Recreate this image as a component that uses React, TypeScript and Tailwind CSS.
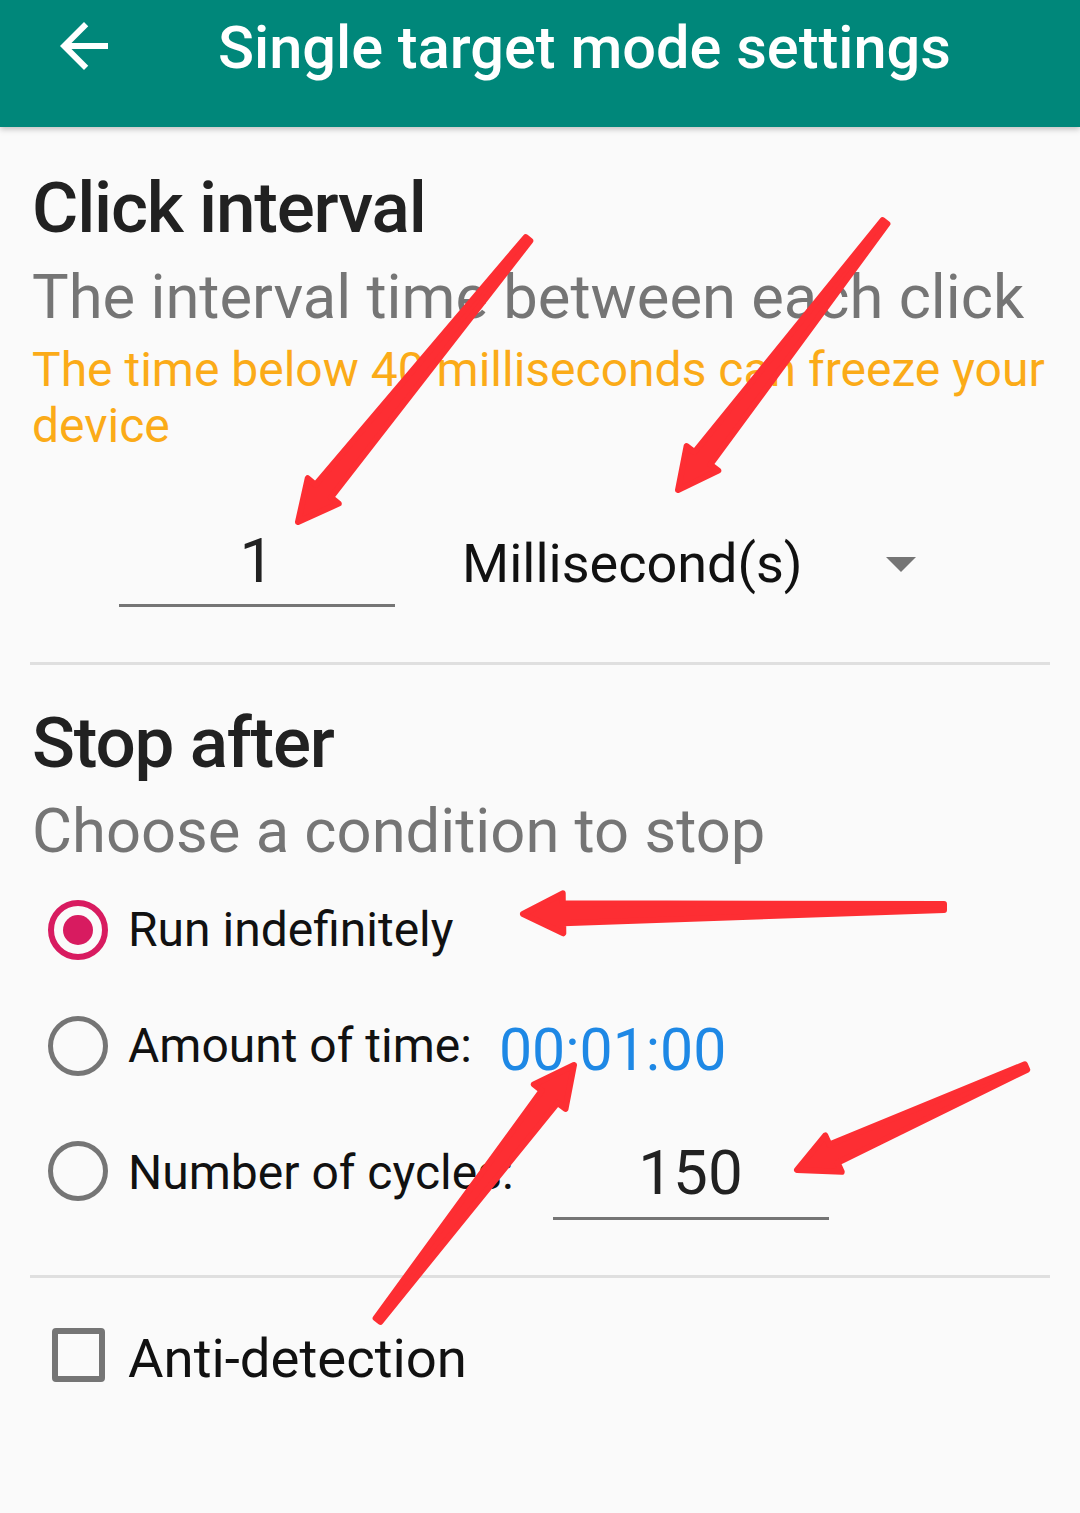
import { Fragment } from "react";

type Pt = [number, number];

// red hand-drawn style arrows on top of the screenshot
const arrows: { tail: Pt; tip: Pt }[] = [
  { tail: [528, 239], tip: [298, 522] },
  { tail: [885, 222], tip: [678, 490] },
  { tail: [944, 907], tip: [523, 914] },
  { tail: [378, 1320], tip: [574, 1065] },
  { tail: [1026, 1067], tip: [797, 1170] },
];

function arrowPoints(tail: Pt, tip: Pt) {
  const dx = tip[0] - tail[0];
  const dy = tip[1] - tail[1];
  const len = Math.hypot(dx, dy);
  const ux = dx / len;
  const uy = dy / len;
  const nx = -uy;
  const ny = ux;
  const headLen = 40;
  const headHalf = 20;
  const shaftHalf = 10;
  const tailHalf = 3;
  const bx = tip[0] - ux * headLen;
  const by = tip[1] - uy * headLen;
  const pts: Pt[] = [
    [tail[0] + nx * tailHalf, tail[1] + ny * tailHalf],
    [bx + nx * shaftHalf, by + ny * shaftHalf],
    [bx + nx * headHalf, by + ny * headHalf],
    [tip[0], tip[1]],
    [bx - nx * headHalf, by - ny * headHalf],
    [bx - nx * shaftHalf, by - ny * shaftHalf],
    [tail[0] - nx * tailHalf, tail[1] - ny * tailHalf],
  ];
  return pts.map((p) => `${p[0].toFixed(1)},${p[1].toFixed(1)}`).join(" ");
}

function Radio({ checked }: { checked?: boolean }) {
  if (checked) {
    return (
      <div className="w-[60px] h-[60px] rounded-full border-[6px] border-[#d81b60] flex items-center justify-center shrink-0">
        <div className="w-[30px] h-[30px] rounded-full bg-[#d81b60]" />
      </div>
    );
  }
  return <div className="w-[60px] h-[60px] rounded-full border-[5px] border-[#757575] shrink-0" />;
}

export default function App() {
  return (
    <div className="relative w-[1080px] min-h-[1513px] bg-[#fafafa] font-[Roboto,sans-serif] overflow-hidden">
      <div className="h-[127px] bg-[#00877a] shadow-[0_2px_6px_rgba(0,0,0,0.25)] flex items-start relative z-10">
        <svg className="ml-[48px] mt-[10px]" width="72" height="72" viewBox="0 0 24 24" fill="white">
          <path d="M20 11H7.83l5.59-5.59L12 4l-8 8 8 8 1.41-1.41L7.83 13H20v-2z" />
        </svg>
        <div className="ml-[98px] mt-[16px] text-white text-[59.5px] leading-[64px] font-medium">
          Single target mode settings
        </div>
      </div>

      <div className="px-[30px]">
        <div className="pl-[2px]">
          <div className="mt-[41px] text-[71px] leading-[80px] font-medium text-[#212121] tracking-[-1.2px]">
            Click interval
          </div>
          <div className="mt-[15px] text-[61.5px] leading-[68px] text-[#757575]">
            The interval time between each click
          </div>
          <div className="mt-[11px] text-[48px] leading-[56px] text-[#fbab18]">
            The time below 40 milliseconds can freeze your device
          </div>

          <div className="mt-[72px] flex items-baseline">
            <div className="ml-[87px] w-[276px] border-b-[3px] border-[#757575] text-center text-[62px] leading-[70px] pb-[8px] text-[#212121]">
              1
            </div>
            <div className="ml-[67px] w-[454px] flex items-center">
              <span className="text-[54px] leading-[64px] text-[#111]">Millisecond(s)</span>
              <div className="ml-auto w-0 h-0 border-l-[15px] border-r-[15px] border-t-[15px] border-l-transparent border-r-transparent border-t-[#757575]" />
            </div>
          </div>
        </div>

        <div className="mt-[55px] h-[3px] bg-[#dfdfdf]" />

        <div className="pl-[2px]">
          <div className="mt-[38px] text-[71px] leading-[80px] font-medium text-[#212121] tracking-[-1.2px]">
            Stop after
          </div>
          <div className="mt-[14px] text-[61.5px] leading-[68px] text-[#757575]">
            Choose a condition to stop
          </div>
        </div>

        <div className="pl-[18px]">
          <div className="mt-[35px] h-[60px] flex items-center">
            <Radio checked />
            <span className="ml-[20px] text-[48px] leading-[56px] text-[#111]">Run indefinitely</span>
          </div>
          <div className="mt-[56px] h-[60px] flex items-center">
            <Radio />
            <span className="ml-[20px] text-[48px] leading-[56px] text-[#111]">Amount of time:</span>
            <span className="ml-[27px] mt-[8px] text-[59px] leading-[68px] text-[#1e88e5]">00:01:00</span>
          </div>
          <div className="mt-[62px] flex items-start">
            <div className="mt-[3px]">
              <Radio />
            </div>
            <span className="ml-[20px] mt-[7px] text-[48px] leading-[56px] text-[#111]">Number of cycles:</span>
            <div className="ml-[39px] w-[276px] border-b-[3px] border-[#757575] text-center text-[62px] leading-[70px] pb-[9px] text-[#212121]">
              150
            </div>
          </div>
        </div>

        <div className="mt-[55px] h-[3px] bg-[#dfdfdf]" />

        <div className="mt-[48px] flex items-start pl-[22px]">
          <div className="mt-[2px] w-[53px] h-[54px] rounded-[4px] border-[6px] border-[#757575] shrink-0" />
          <span className="ml-[23px] text-[54.5px] leading-[64px] text-[#111]">Anti-detection</span>
        </div>
      </div>

      <svg className="absolute inset-0 pointer-events-none z-20" width="1080" height="1513" viewBox="0 0 1080 1513">
        {arrows.map((a, i) => (
          <Fragment key={i}>
            <polygon
              points={arrowPoints(a.tail, a.tip)}
              fill="#fd2e33"
              stroke="#fd2e33"
              strokeWidth="6"
              strokeLinejoin="round"
            />
          </Fragment>
        ))}
      </svg>
    </div>
  );
}
